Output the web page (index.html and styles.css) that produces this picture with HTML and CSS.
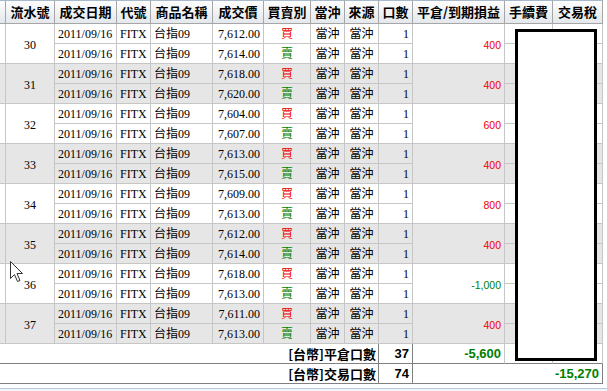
FILE: index.html
```html
<!DOCTYPE html>
<html lang="zh-Hant">
<head>
<meta charset="utf-8">
<title>當沖明細</title>
<link rel="stylesheet" href="styles.css">
</head>
<body>
<div class="wrap">
<table class="grid">
<colgroup>
<col class="w0"><col class="w1"><col class="w2"><col class="w3"><col class="w4"><col class="w5"><col class="w6"><col class="w7"><col class="w8"><col class="w9"><col class="w10"><col class="w11"><col class="w12">
</colgroup>
<thead>
<tr><th class="stub"></th><th>流水號</th><th>成交日期</th><th>代號</th><th>商品名稱</th><th>成交價</th><th>買賣別</th><th>當沖</th><th>來源</th><th>口數</th><th>平倉/到期損益</th><th>手續費</th><th>交易稅</th></tr>
</thead>
<tbody>
<tr class="odd"><td class="stub" rowspan="2"></td><td class="seq" rowspan="2">30</td><td>2011/09/16</td><td>FITX</td><td>台指09</td><td class="r">7,612.00</td><td class="c buy">買</td><td class="c">當沖</td><td class="c">當沖</td><td class="r">1</td><td class="pl pos" rowspan="2">400</td><td></td><td></td></tr>
<tr class="odd"><td>2011/09/16</td><td>FITX</td><td>台指09</td><td class="r">7,614.00</td><td class="c sell">賣</td><td class="c">當沖</td><td class="c">當沖</td><td class="r">1</td><td></td><td></td></tr>

<tr class="even"><td class="stub" rowspan="2"></td><td class="seq" rowspan="2">31</td><td>2011/09/16</td><td>FITX</td><td>台指09</td><td class="r">7,618.00</td><td class="c buy">買</td><td class="c">當沖</td><td class="c">當沖</td><td class="r">1</td><td class="pl pos" rowspan="2">400</td><td></td><td></td></tr>
<tr class="even"><td>2011/09/16</td><td>FITX</td><td>台指09</td><td class="r">7,620.00</td><td class="c sell">賣</td><td class="c">當沖</td><td class="c">當沖</td><td class="r">1</td><td></td><td></td></tr>

<tr class="odd"><td class="stub" rowspan="2"></td><td class="seq" rowspan="2">32</td><td>2011/09/16</td><td>FITX</td><td>台指09</td><td class="r">7,604.00</td><td class="c buy">買</td><td class="c">當沖</td><td class="c">當沖</td><td class="r">1</td><td class="pl pos" rowspan="2">600</td><td></td><td></td></tr>
<tr class="odd"><td>2011/09/16</td><td>FITX</td><td>台指09</td><td class="r">7,607.00</td><td class="c sell">賣</td><td class="c">當沖</td><td class="c">當沖</td><td class="r">1</td><td></td><td></td></tr>

<tr class="even"><td class="stub" rowspan="2"></td><td class="seq" rowspan="2">33</td><td>2011/09/16</td><td>FITX</td><td>台指09</td><td class="r">7,613.00</td><td class="c buy">買</td><td class="c">當沖</td><td class="c">當沖</td><td class="r">1</td><td class="pl pos" rowspan="2">400</td><td></td><td></td></tr>
<tr class="even"><td>2011/09/16</td><td>FITX</td><td>台指09</td><td class="r">7,615.00</td><td class="c sell">賣</td><td class="c">當沖</td><td class="c">當沖</td><td class="r">1</td><td></td><td></td></tr>

<tr class="odd"><td class="stub" rowspan="2"></td><td class="seq" rowspan="2">34</td><td>2011/09/16</td><td>FITX</td><td>台指09</td><td class="r">7,609.00</td><td class="c buy">買</td><td class="c">當沖</td><td class="c">當沖</td><td class="r">1</td><td class="pl pos" rowspan="2">800</td><td></td><td></td></tr>
<tr class="odd"><td>2011/09/16</td><td>FITX</td><td>台指09</td><td class="r">7,613.00</td><td class="c sell">賣</td><td class="c">當沖</td><td class="c">當沖</td><td class="r">1</td><td></td><td></td></tr>

<tr class="even"><td class="stub" rowspan="2"></td><td class="seq" rowspan="2">35</td><td>2011/09/16</td><td>FITX</td><td>台指09</td><td class="r">7,612.00</td><td class="c buy">買</td><td class="c">當沖</td><td class="c">當沖</td><td class="r">1</td><td class="pl pos" rowspan="2">400</td><td></td><td></td></tr>
<tr class="even"><td>2011/09/16</td><td>FITX</td><td>台指09</td><td class="r">7,614.00</td><td class="c sell">賣</td><td class="c">當沖</td><td class="c">當沖</td><td class="r">1</td><td></td><td></td></tr>

<tr class="odd"><td class="stub" rowspan="2"></td><td class="seq" rowspan="2">36</td><td>2011/09/16</td><td>FITX</td><td>台指09</td><td class="r">7,618.00</td><td class="c buy">買</td><td class="c">當沖</td><td class="c">當沖</td><td class="r">1</td><td class="pl neg" rowspan="2">-1,000</td><td></td><td></td></tr>
<tr class="odd"><td>2011/09/16</td><td>FITX</td><td>台指09</td><td class="r">7,613.00</td><td class="c sell">賣</td><td class="c">當沖</td><td class="c">當沖</td><td class="r">1</td><td></td><td></td></tr>

<tr class="even"><td class="stub" rowspan="2"></td><td class="seq" rowspan="2">37</td><td>2011/09/16</td><td>FITX</td><td>台指09</td><td class="r">7,611.00</td><td class="c buy">買</td><td class="c">當沖</td><td class="c">當沖</td><td class="r">1</td><td class="pl pos" rowspan="2">400</td><td></td><td></td></tr>
<tr class="even"><td>2011/09/16</td><td>FITX</td><td>台指09</td><td class="r">7,613.00</td><td class="c sell">賣</td><td class="c">當沖</td><td class="c">當沖</td><td class="r">1</td><td></td><td></td></tr>
</tbody>
<tfoot>
<tr class="sum"><td class="lbl" colspan="9">[台幣]平倉口數</td><td class="tot">37</td><td class="tot neg soft">-5,600</td><td class="soft"></td><td class="soft"></td></tr>
<tr class="sum"><td class="lbl" colspan="9">[台幣]交易口數</td><td class="tot">74</td><td class="tot neg" colspan="3">-15,270</td></tr>
</tfoot>
</table>
<div class="statusbar"></div>
<div class="mask"></div>
<svg class="cursor" width="14" height="22" viewBox="0 0 14 22"><path d="M0.5 0.5 L0.5 17.5 L4.5 13.5 L7.5 20.5 L10 19.5 L7 12.5 L12.5 12.5 Z" fill="#fff" stroke="#333" stroke-width="1" stroke-linejoin="miter"/></svg>
</div>
</body>
</html>
```
FILE: styles.css
```css
html, body {
  margin: 0;
  padding: 0;
  background: #fff;
}
.wrap {
  position: relative;
  width: 607px;
  height: 391px;
  overflow: hidden;
}
.grid {
  table-layout: fixed;
  width: 603px;
  border-collapse: separate;
  border-spacing: 0;
  font-family: "Liberation Serif", "Noto Sans CJK TC", serif;
  font-size: 12px;
  color: #000;
}
.w0 { width: 6px; }
.w1 { width: 49px; }
.w2 { width: 62px; }
.w3 { width: 34px; }
.w4 { width: 62px; }
.w5 { width: 51px; }
.w6 { width: 47px; }
.w7 { width: 34px; }
.w8 { width: 34px; }
.w9 { width: 34px; }
.w10 { width: 92px; }
.w11 { width: 48px; }
.w12 { width: 50px; }

.grid th {
  height: 24px;
  box-sizing: border-box;
  padding: 0;
  font-family: "Noto Sans CJK TC", sans-serif;
  font-weight: bold;
  font-size: 13px;
  line-height: 16px;
  text-align: center;
  white-space: nowrap;
  overflow: hidden;
  background: linear-gradient(#fdfdfd, #e4e8ec);
  border-top: 1px solid #a9b9cc;
  border-right: 1px solid #a6a6a6;
  border-bottom: 1px solid #a6a6a6;
}
.grid tbody tr { height: 20px; }
.grid td {
  box-sizing: border-box;
  padding: 0 3px;
  line-height: 14px;
  white-space: nowrap;
  overflow: hidden;
  border-right: 1px solid #c6c6c6;
  border-bottom: 1px solid #c6c6c6;
  vertical-align: middle;
}
.grid .stub { padding: 0; }
.odd td { background: #fff; }
.even td { background: #e6e6e6; }
.grid td.seq { text-align: center; padding: 2px 0 0; }
.grid td.r { text-align: right; }
.grid td.c { text-align: center; padding: 0; }
.buy { color: #f00000; }
.sell { color: #008000; }
.grid td.pl {
  text-align: right;
  font-family: "Liberation Sans", sans-serif;
  font-size: 10.5px;
  padding: 3px 3px 0 0;
}
.pos { color: #f00000; }
.neg { color: #008000; }

.sum { height: 20px; }
.grid .sum td {
  background: #fff;
  border-bottom: 1px solid #808080;
  border-right: 1px solid #808080;
  font-weight: bold;
  text-align: right;
}
.grid .sum td.lbl {
  font-family: "Noto Sans CJK TC", sans-serif;
  font-size: 13px;
  padding-right: 2px;
}
.grid .sum td.tot {
  font-family: "Liberation Sans", sans-serif;
  font-size: 13px;
  padding-right: 3px;
}
.grid .sum td.soft { border-right-color: #c6c6c6; }

.statusbar {
  margin-top: 4px;
  height: 3px;
  border-top: 1px solid #b8c8dc;
  background: #f3f5f8;
}
.mask {
  position: absolute;
  left: 515px;
  top: 29px;
  width: 82px;
  height: 332px;
  box-sizing: border-box;
  border: 3px solid #000;
  background: #fff;
}
.cursor {
  position: absolute;
  left: 10px;
  top: 261px;
}
```
